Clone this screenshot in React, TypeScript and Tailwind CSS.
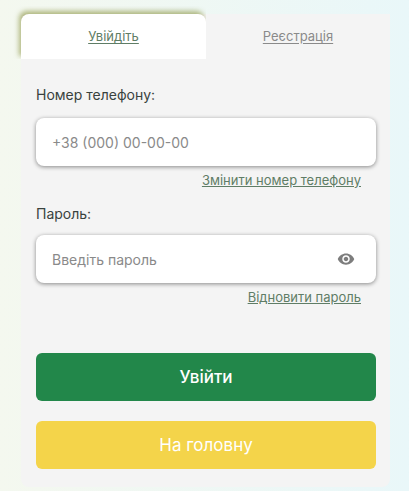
import type { ReactNode } from 'react'

function Field({ label, placeholder, link, gap, eye }: { label: string; placeholder: string; link: string; gap: string; eye?: ReactNode }) {
    return (
        <div>
            <p className={`text-[14px] leading-[20px] text-[#39423e] ${gap}`}>{label}</p>
            <div className="h-[48px] bg-white rounded-lg shadow-[0_1px_4px_rgba(0,0,0,0.45)] flex items-center justify-between pl-4 pr-[21px]">
                <span className="text-[14px] text-[#8a8a8a]">{placeholder}</span>
                {eye}
            </div>
            <div className="mt-[5px] pr-[15px] text-right text-[13px] leading-[18px] text-[#5f7d66] underline">{link}</div>
        </div>
    )
}

function EyeIcon() {
    return (
        <svg viewBox="0 0 24 24" className="w-[18px] h-[18px] fill-[#7d7d7d]">
            <path d="M12 4.5C7 4.5 2.7 7.6 1 12c1.7 4.4 6 7.5 11 7.5s9.3-3.1 11-7.5c-1.7-4.4-6-7.5-11-7.5zM12 17c-2.8 0-5-2.2-5-5s2.2-5 5-5 5 2.2 5 5-2.2 5-5 5zm0-8c-1.7 0-3 1.3-3 3s1.3 3 3 3 3-1.3 3-3-1.3-3-3-3z" />
        </svg>
    )
}

export default function App() {
    return (
        <div className="h-[491px] overflow-hidden bg-gradient-to-r from-[#f4f8ef] to-[#e9f7f9] pl-[21px] pr-[19px] pt-[14px] font-['Inter',sans-serif]">
            <div className="h-[473px] bg-[#f4f4f4] rounded-b-lg">
                <div className="flex h-[45px]">
                    <div className="w-[185px] bg-white rounded-t-lg shadow-[-2px_-3px_5px_rgba(130,140,50,0.6)] [clip-path:inset(-8px_0_0_-8px)] flex items-center justify-center">
                        <span className="text-[13px] text-[#5f7d66] underline underline-offset-2">Увійдіть</span>
                    </div>
                    <div className="flex-1 flex items-center justify-center">
                        <span className="text-[13px] text-[#8a8a8a] underline underline-offset-2">Реєстрація</span>
                    </div>
                </div>
                <div className="pl-[15px] pr-[14px] pt-[26px]">
                    <Field label="Номер телефону:" placeholder="+38 (000) 00-00-00" link="Змінити номер телефону" gap="mb-[13px]" />
                    <div className="mt-[15px]">
                        <Field label="Пароль:" placeholder="Введіть пароль" link="Відновити пароль" gap="mb-[11px]" eye={<EyeIcon />} />
                    </div>
                    <div className="mt-[47px] flex flex-col gap-5">
                        <button className="h-[48px] pt-0.5 rounded-md bg-[#22874a] text-white text-[17px] font-medium">Увійти</button>
                        <button className="h-[48px] pt-0.5 rounded-md bg-[#f4d44a] text-white text-[17px]">На головну</button>
                    </div>
                </div>
            </div>
        </div>
    )
}
